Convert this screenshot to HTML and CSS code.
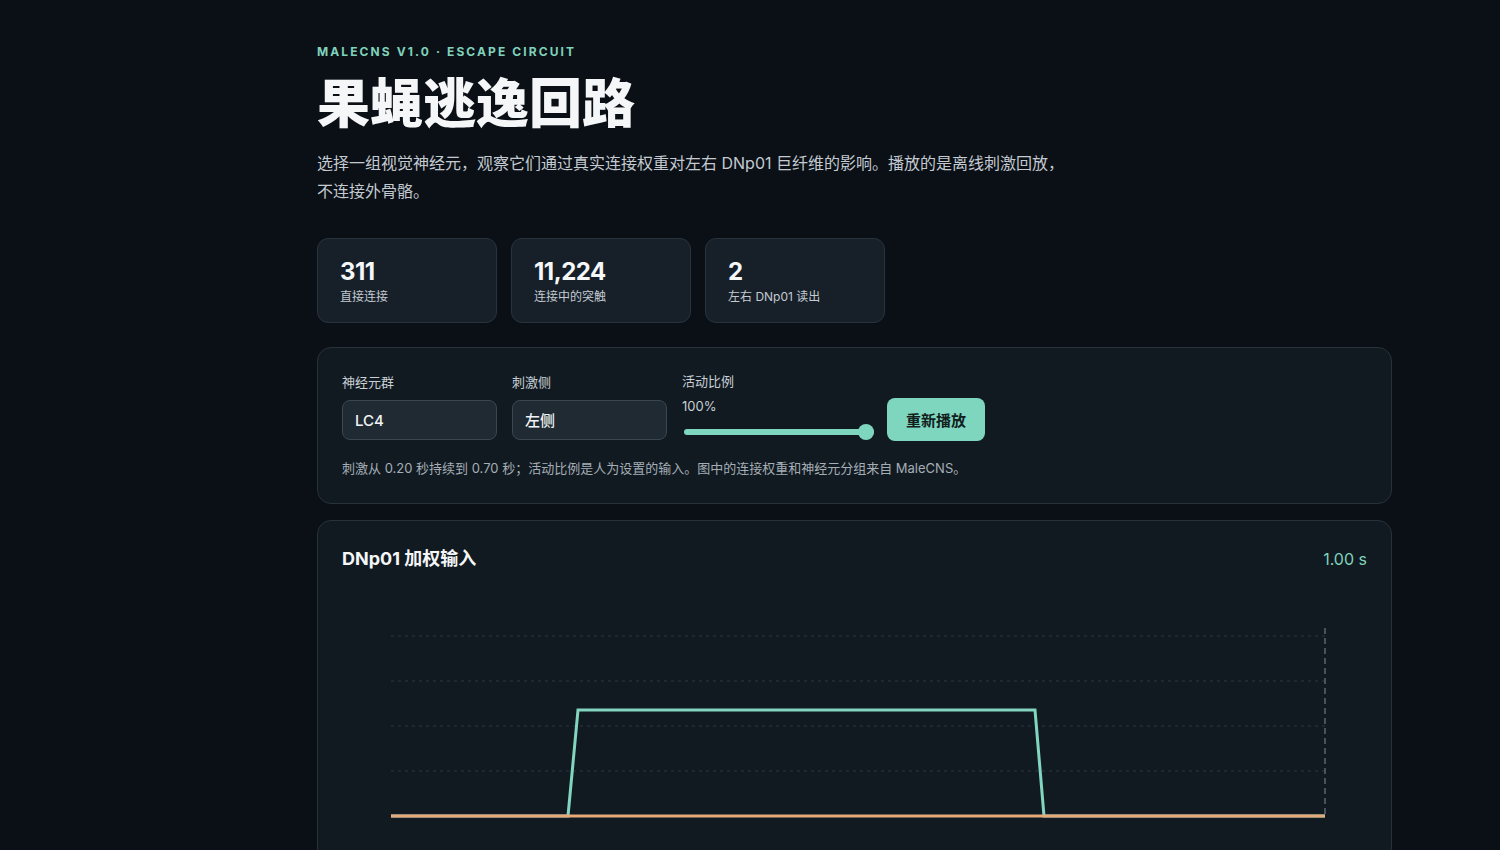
FILE: index.html
```html
<!DOCTYPE html>
<html lang="zh-CN">
<head>
    <meta charset="utf-8">
    <title>果蝇逃逸回路</title>
    <link rel="stylesheet" href="styles.css">
</head>
<body>
    <main class="page">

        <header class="intro">
            <p class="eyebrow">MaleCNS v1.0 · Escape circuit</p>
            <h1 class="title">果蝇逃逸回路</h1>
            <p class="lede">选择一组视觉神经元，观察它们通过真实连接权重对左右 DNp01 巨纤维的影响。播放的是离线刺激回放，不连接外骨骼。</p>
        </header>

        <section class="stats">
            <div class="stat">
                <div class="stat-value">311</div>
                <div class="stat-label">直接连接</div>
            </div>
            <div class="stat">
                <div class="stat-value">11,224</div>
                <div class="stat-label">连接中的突触</div>
            </div>
            <div class="stat">
                <div class="stat-value">2</div>
                <div class="stat-label">左右 DNp01 读出</div>
            </div>
        </section>

        <section class="panel controls">
            <div class="control-row">
                <label class="field">
                    <span class="field-label">神经元群</span>
                    <select class="select" id="group">
                        <option>LC4</option>
                    </select>
                </label>
                <label class="field">
                    <span class="field-label">刺激侧</span>
                    <select class="select" id="side">
                        <option>左侧</option>
                    </select>
                </label>
                <label class="field field-range">
                    <span class="field-label">活动比例</span>
                    <span class="range-value">100%</span>
                    <input class="range" type="range" id="ratio" min="0" max="100" value="100">
                </label>
                <button class="replay" id="replay">重新播放</button>
            </div>
            <p class="note">刺激从 0.20 秒持续到 0.70 秒；活动比例是人为设置的输入。图中的连接权重和神经元分组来自 MaleCNS。</p>
        </section>

        <section class="panel chart">
            <div class="chart-head">
                <h2 class="chart-title">DNp01 加权输入</h2>
                <span class="chart-time">1.00 s</span>
            </div>
            <svg class="plot" viewBox="0 0 1026 260" width="1026" height="260">
                <!-- horizontal grid -->
                <g class="grid">
                    <line x1="49" y1="55" x2="983" y2="55"/>
                    <line x1="49" y1="100" x2="983" y2="100"/>
                    <line x1="49" y1="145" x2="983" y2="145"/>
                    <line x1="49" y1="190" x2="983" y2="190"/>
                </g>
                <!-- playhead at 1.00 s -->
                <line class="playhead" x1="983" y1="47" x2="983" y2="235"/>
                <!-- left DNp01 -->
                <polyline class="trace-left" points="49,235 226,235 236,129 693,129 702,235 983,235"/>
                <!-- right DNp01 (no input), drawn on top -->
                <polyline class="trace-right" points="49,235 983,235"/>
            </svg>
        </section>

    </main>
</body>
</html>
```

FILE: styles.css
```css
html, body{
    margin: 0;
    background-color: #0b1016;
}

body{
    font-family: "Inter", "Noto Sans CJK SC", sans-serif;
    color: #e9eef2;
}

.page{
    width: 1075px;
    padding: 43px 0 40px 317px;
}

.eyebrow{
    margin: 0;
    font-size: 12px;
    font-weight: 700;
    letter-spacing: 2.1px;
    text-transform: uppercase;
    color: #7fd2bb;
    line-height: 18px;
}

.title{
    margin: 9px 0 0;
    font-size: 53px;
    font-weight: 800;
    line-height: 68px;
    color: #f4f6f8;
}

.lede{
    margin: 11px 0 0;
    max-width: 760px;
    font-size: 16px;
    line-height: 28px;
    color: #c3cad1;
}

.stats{
    display: flex;
    gap: 14px;
    margin-top: 33px;
}

.stat{
    width: 134px;
    padding: 18px 22px 17px;
    background-color: #172029;
    border: 1px solid #29333d;
    border-radius: 11px;
}

.stat-value{
    font-size: 24px;
    font-weight: 700;
    line-height: 29px;
    color: #f5f7f9;
    letter-spacing: -0.5px;
}

.stat-label{
    margin-top: 2px;
    font-size: 12px;
    line-height: 17px;
    color: #c3cad1;
}

.panel{
    background-color: #121a21;
    border: 1px solid #28323c;
    border-radius: 14px;
}

.controls{
    margin-top: 24px;
    padding: 24px 24px 26px;
}

.control-row{
    display: flex;
    align-items: flex-end;
    gap: 15px;
}

.field{
    display: flex;
    flex-direction: column;
    width: 155px;
}

.field-label{
    font-size: 13px;
    line-height: 18px;
    color: #c8cfd5;
    margin-bottom: 9px;
}

.select{
    -webkit-appearance: none;
    appearance: none;
    height: 40px;
    padding: 0 12px;
    font-family: inherit;
    font-size: 15px;
    font-weight: 500;
    color: #f1f4f6;
    background-color: #1f2a33;
    border: 1px solid #3a4650;
    border-radius: 8px;
}

.field-range{
    width: 190px;
}

.field-range .field-label{
    margin-bottom: 7px;
}

.range-value{
    font-size: 13px;
    line-height: 18px;
    color: #c8cfd5;
}

.range{
    -webkit-appearance: none;
    appearance: none;
    width: 190px;
    height: 6px;
    margin: 14px 0 5px 2px;
    background-color: #7fd6be;
    border-radius: 3px;
    outline: none;
}

.range::-webkit-slider-thumb{
    -webkit-appearance: none;
    width: 16px;
    height: 16px;
    border-radius: 50%;
    background-color: #7fd6be;
    border: none;
}

.replay{
    height: 43px;
    width: 98px;
    font-family: inherit;
    font-size: 15px;
    font-weight: 700;
    color: #10201c;
    background-color: #7fd6be;
    border: none;
    border-radius: 8px;
    cursor: pointer;
    position: relative;
    top: 1px;
}

.note{
    margin: 19px 0 0;
    font-size: 13px;
    line-height: 18px;
    color: #a4aeb6;
}

.chart{
    margin-top: 16px;
    padding: 25px 24px 20px;
}

.chart-head{
    display: flex;
    justify-content: space-between;
    align-items: center;
}

.chart-title{
    margin: 0;
    font-size: 18px;
    font-weight: 700;
    line-height: 26px;
    color: #f4f6f8;
}

.chart-time{
    font-size: 16px;
    color: #7fd2bb;
}

.plot{
    display: block;
    margin-top: 9px;
}

.grid line{
    stroke: #2b3640;
    stroke-width: 1;
    stroke-dasharray: 3 4;
}

.playhead{
    stroke: #6e7982;
    stroke-width: 1.2;
    stroke-dasharray: 6 4;
}

.trace-left{
    fill: none;
    stroke: #82d5bf;
    stroke-width: 3;
    stroke-linejoin: miter;
}

.trace-right{
    fill: none;
    stroke: #e7a87a;
    stroke-width: 3;
}
```
